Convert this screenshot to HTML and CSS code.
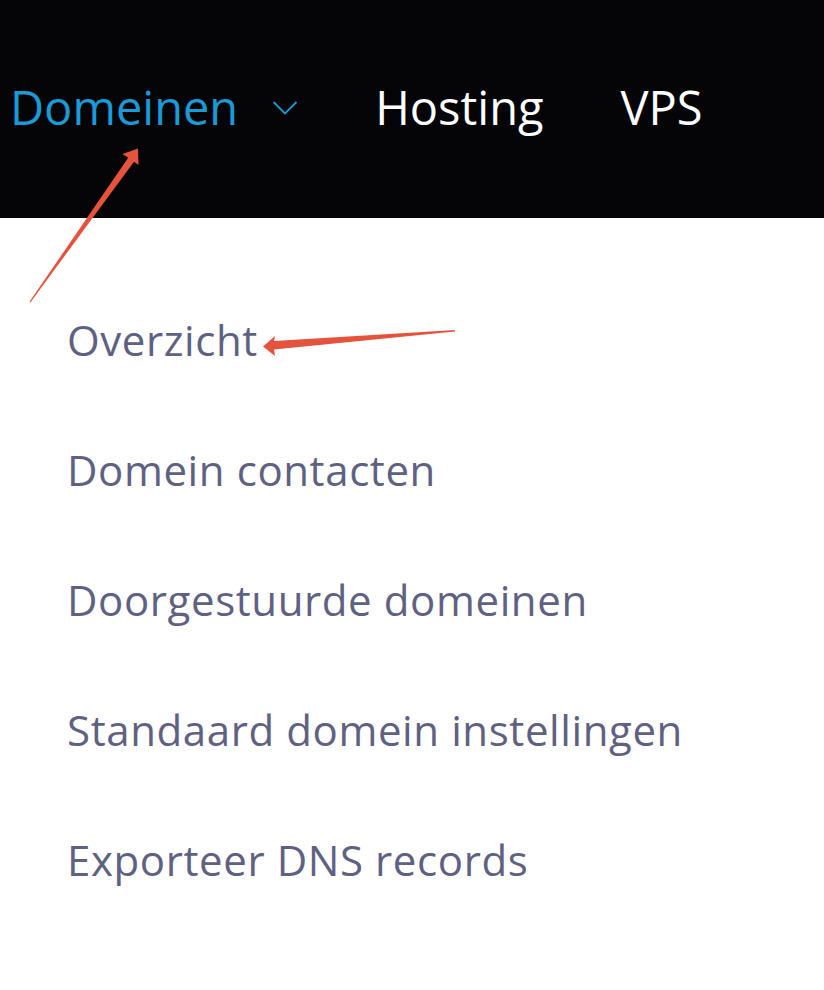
FILE: index.html
```html
<!DOCTYPE html>
<html lang="nl">
<head>
    <meta charset="UTF-8">
    <meta name="viewport" content="width=device-width, initial-scale=1.0">
    <title>Domeinen menu</title>
    <link rel="stylesheet" href="styles.css">
</head>
<body>
    <div class="page">
        <nav class="topbar">
            <a class="nav-item active" href="#">Domeinen
                <svg class="chevron" width="26" height="16" viewBox="0 0 26 16"><path d="M1.5 2 L13 13.5 L24.5 2" fill="none" stroke="#1a9ad6" stroke-width="1.8"/></svg>
            </a>
            <a class="nav-item" href="#">Hosting</a>
            <a class="nav-item" href="#">VPS</a>
        </nav>

        <ul class="submenu">
            <li><a href="#">Overzicht</a></li>
            <li><a href="#">Domein contacten</a></li>
            <li><a href="#">Doorgestuurde domeinen</a></li>
            <li><a href="#">Standaard domein instellingen</a></li>
            <li><a href="#">Exporteer DNS records</a></li>
        </ul>

        <!-- pijlen die over de schermafbeelding liggen -->
        <svg class="arrows" width="824" height="990" viewBox="0 0 824 990">
            <polygon points="29.5,301.7 128.2,157.8 122.5,154 138,148.5 138.5,165 134,161.8 30.5,302.3" fill="#e5533d"/>
            <polygon points="455,330 274,341 275,336 263,346.5 275,356 274,349.5 455,331.5" fill="#e5533d"/>
        </svg>
    </div>
</body>
</html>
```

FILE: styles.css
```css
body {
    margin: 0;
    background-color: #ffffff;
    font-family: "Open Sans", "Noto Sans", sans-serif;
}

.page {
    position: relative;
    width: 824px;
    height: 990px;
    overflow: hidden;
}

.topbar {
    height: 218px;
    background-color: #050407;
    display: flex;
    align-items: center;
    padding: 0 0 4px 10px;
    gap: 77px;
    box-sizing: border-box;
}

.nav-item {
    color: #ffffff;
    text-decoration: none;
    font-size: 47px;
    font-weight: 500;
    display: flex;
    align-items: center;
}

.nav-item.active {
    color: #1a9ad6;
}

.chevron {
    margin-left: 34px;
    margin-top: 2px;
}

.submenu {
    list-style: none;
    margin: 0;
    padding: 57px 0 0 67px;
}

.submenu li {
    height: 130px;
    line-height: 130px;
}

.submenu a {
    color: #5f6182;
    text-decoration: none;
    font-size: 42px;
    letter-spacing: 0.6px;
}

.arrows {
    position: absolute;
    left: 0;
    top: 0;
    pointer-events: none;
}
```
